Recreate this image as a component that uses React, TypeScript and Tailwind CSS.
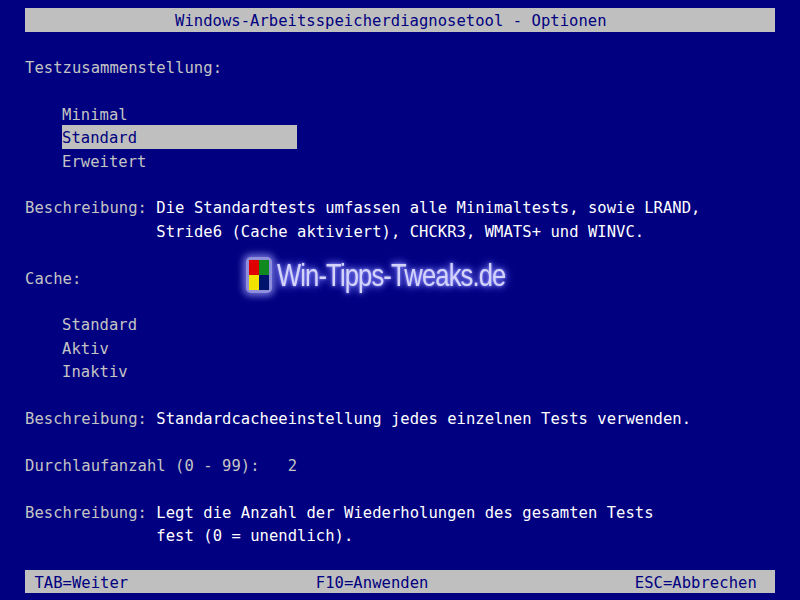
// App.tsx - Windows memory diagnostic options screen
const row = 'h-[23.4px] pt-[2px] leading-[23.4px] whitespace-pre'
const desc = 'text-[#ffffff]'

function Desc({ lines }: { lines: string[] }) {
  return (
    <>
      {lines.map((line, i) => (
        <div key={line} className={row}>
          <span>{i === 0 ? 'Beschreibung: ' : '              '}</span>
          <span className={desc}>{line}</span>
        </div>
      ))}
    </>
  )
}

function Gap() {
  return <div className="h-[23.4px]" />
}

function Option({ label, active }: { label: string; active?: boolean }) {
  return (
    <div className={`${row} ml-[37px] w-[235px] ${active ? 'bg-[#bfbfbf] text-[#000080]' : ''}`}>
      {label}
    </div>
  )
}

function Logo() {
  return (
    <div className="absolute left-[246px] top-[257px] flex items-center gap-[5px]">
      <div className="w-[26px] h-[36px] p-[3px] rounded-[5px] bg-[#8f8fdc] shadow-[0_0_7px_3px_#6f6fd8]">
        <div className="w-full h-full grid grid-cols-2 grid-rows-2 blur-[0.6px]">
          <div className="bg-[#e00000]" />
          <div className="bg-[#0f8a1e]" />
          <div className="bg-[#f2e200]" />
          <div className="bg-[#00146e]" />
        </div>
      </div>
      <div className="w-[229px] origin-left scale-x-[0.8] font-['Liberation_Sans',sans-serif] text-[32px] leading-[36px] tracking-[-1.1px] whitespace-nowrap text-[#d4d4fa] [text-shadow:0_0_3px_#9a9aff,0_0_8px_#7a7aff,0_0_12px_#6a6af0]">
        Win-Tipps-Tweaks.de
      </div>
    </div>
  )
}

export default function App() {
  return (
    <div className="relative w-[800px] h-[600px] overflow-hidden bg-[#000080] text-[#c4c4c4] font-['DejaVu_Sans_Mono',monospace] text-[15.5px] tracking-[0.05px] px-[25px] pt-[8.3px]">
      <div className={`${row} bg-[#bfbfbf] text-[#000080] pl-[150px]`}>Windows-Arbeitsspeicherdiagnosetool - Optionen</div>
      <Gap />
      <div className={row}>Testzusammenstellung:</div>
      <Gap />
      <Option label="Minimal" />
      <Option label="Standard" active />
      <Option label="Erweitert" />
      <Gap />
      <Desc lines={['Die Standardtests umfassen alle Minimaltests, sowie LRAND,', 'Stride6 (Cache aktiviert), CHCKR3, WMATS+ und WINVC.']} />
      <Gap />
      <div className={row}>Cache:</div>
      <Gap />
      <Option label="Standard" />
      <Option label="Aktiv" />
      <Option label="Inaktiv" />
      <Gap />
      <Desc lines={['Standardcacheeinstellung jedes einzelnen Tests verwenden.']} />
      <Gap />
      <div className={row}>
        Durchlaufanzahl (0 - 99):   <span>2</span>
      </div>
      <Gap />
      <Desc lines={['Legt die Anzahl der Wiederholungen des gesamten Tests', 'fest (0 = unendlich).']} />
      <Gap />
      <div className={`${row} bg-[#bfbfbf] text-[#000080]`}>{' TAB=Weiter                    F10=Anwenden                      ESC=Abbrechen'}</div>
      <Logo />
    </div>
  )
}
